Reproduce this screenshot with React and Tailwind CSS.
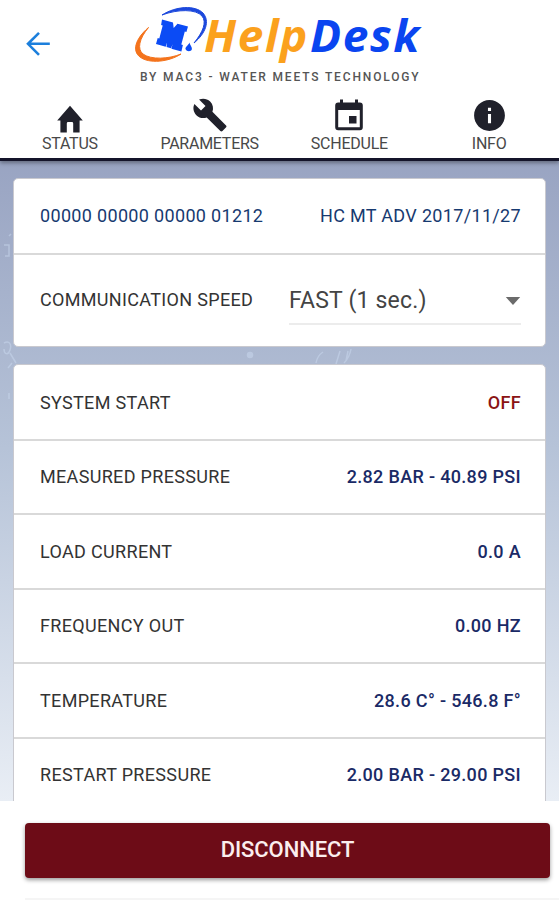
// Page - HelpDesk device status
// Shows the live readings of the connected pump controller

import React from 'react';
import { MdBuild, MdInfo } from 'react-icons/md';

const READINGS = [
  { label: 'SYSTEM START', value: 'OFF', alert: true },
  { label: 'MEASURED PRESSURE', value: '2.82 BAR - 40.89 PSI' },
  { label: 'LOAD CURRENT', value: '0.0 A' },
  { label: 'FREQUENCY OUT', value: '0.00 HZ' },
  { label: 'TEMPERATURE', value: '28.6 C° - 546.8 F°' },
  { label: 'RESTART PRESSURE', value: '2.00 BAR - 29.00 PSI' },
];

function HomeIcon() {
  return (
    <svg className="mt-2 h-7 w-7" viewBox="0 0 28 28" fill="currentColor">
      <path d="M14 .8L1.2 15.6h3.2v12h6.4V18.4q0-1.3 1.3-1.3h3.8q1.3 0 1.3 1.3v9.2h6.4v-12h3.2z" />
    </svg>
  );
}

function CalendarIcon() {
  return (
    <svg className="h-8 w-7" viewBox="0 0 28 32" fill="currentColor">
      <path d="M5 .5h3v3h12v-3h3v3h1.8q3 0 3 3v21.700q0 3-3 3H3.200q-3 0-3-3V6.500q0-3 3-3H5zM3.200 11v17.200h21.600V11z" fillRule="evenodd" />
      <rect x="14" y="17" width="7.500" height="7.500" />
    </svg>
  );
}

function Logo() {
  return (
    <svg className="h-[66px] w-[300px]" viewBox="0 0 300 66">
      {/* orbit around the badge */}
      <path d="M31 15C45 6 64 5 72 13c7 8 3 20-9 30 9-11 13-21 8-27C65 9 47 9 31 15z" fill="#1c48dc" stroke="#1c48dc" strokeWidth="1" />
      <path d="M17.500 27.500C4 39 1 51 9 57c9 7 29 5 41-3C38 59 20 60 12 54 6 49 8 39 17.500 27.500z" fill="#f4731c" stroke="#f4731c" strokeWidth="1" />
      <path d="M31 19.500l11 3 .7 5.500 3.800-4.300 10.500 2.800-1.600 5.500-1.600-.4-3.500 13 1.600.4-1.500 6.500-10-2.700 1.200-4.500-1.600 4-4.500-1.200.5-4.600-1.300 4.200-9.700-2.600 1.700-6 1.600.4 3.400-13-1.600-.4z" fill="#0b4bf5" />
      <path d="M58.500 42.500c.5 3 3 4.500 2.300 7-.7 2.200-5.200 2.300-6.200-.2-.8-2.500 2.500-3.500 3.900-6.800z" fill="#0b4bf5" />
      <g fontFamily="'Open Sans', 'Noto Sans', sans-serif" fontWeight="700" fontStyle="italic" fontSize="44" letterSpacing="1.5">
        <text x="73" y="52" textLength="105" lengthAdjust="spacingAndGlyphs" fill="#fba11d">Help</text>
        <text x="179" y="52" textLength="111" lengthAdjust="spacingAndGlyphs" fill="#0a45f0">Desk</text>
      </g>
    </svg>
  );
}

function Tab({ label, children }) {
  return (
    <button className="flex flex-col items-center text-[#20212b]">
      <span className="flex h-9 items-center justify-center">{children}</span>
      <span className="mt-[2px] text-[16px] leading-[18px] tracking-[-0.250px] text-[#484848]">{label}</span>
    </button>
  );
}

function Header() {
  return (
    <header className="relative z-10 h-[161px] shrink-0 border-b-[3px] border-[#14142a] bg-white shadow-[0_2px_4px_rgba(0,0,0,0.35)]">
      <div className="flex h-[66px] items-start">
        <button className="ml-[25px] mt-[31px]" aria-label="Back">
          <svg className="h-[26px] w-[26px]" viewBox="0 0 26 26" fill="none" stroke="#1c7fdc" strokeWidth="2.600">
            <path d="M24.800 12.800H3M14 1.800l-11 11 11 11" />
          </svg>
        </button>
        <div className="ml-[80px]">
          <Logo />
        </div>
      </div>
      <p className="pl-[140px] pt-[1px] text-[12px] font-medium leading-[21px] tracking-[1.850px] whitespace-nowrap text-[#555555]">
        BY MAC3 - WATER MEETS TECHNOLOGY
      </p>
      <nav className="mt-[9px] grid grid-cols-4">
        <Tab label="STATUS"><HomeIcon /></Tab>
        <Tab label="PARAMETERS"><MdBuild size={36} /></Tab>
        <Tab label="SCHEDULE"><CalendarIcon /></Tab>
        <Tab label="INFO"><MdInfo size={37} /></Tab>
      </nav>
    </header>
  );
}

// Faint water marks on the page background
function Ripples() {
  return (
    <svg className="pointer-events-none absolute left-0 top-0 h-[640px] w-[559px]" viewBox="0 0 559 640" fill="none" stroke="#cbdaf0" strokeWidth="1.500" opacity="0.5">
      <path d="M4 84h5v11H5M9 75l2-2M4 182c5-3 8 1 6 7s-6 4-6-1M10 192l6 10M8 207l4-5M9 232v6" />
      <path d="M316 202c1-6 4-9 7-11M336 203l4-13M344 202c4-4 6-8 7-14M348 190l-2 10" />
      <circle cx="250" cy="194" r="2.500" fill="#cbdaf0" />
    </svg>
  );
}

function DeviceCard() {
  return (
    <section className="relative shrink-0 rounded-[5px] border border-[#c9c9cf] bg-white text-[18px] tracking-[0.330px]">
      <div className="flex h-[76px] items-center justify-between border-b-2 border-[#d9d9d9] pb-[2px] pl-[26px] pr-[24px] text-[#173a70]">
        <span>00000 00000 00000 01212</span>
        <span>HC MT ADV 2017/11/27</span>
      </div>
      <div className="flex h-[91px] items-center justify-between pb-[1px] pl-[26px] pr-[24px]">
        <span className="pb-[2px] text-[#333333]">COMMUNICATION SPEED</span>
        <div className="flex h-[49px] w-[232px] items-center justify-between border-b-2 border-[#ececec] text-[23px] tracking-[0.200px] text-[#444444]">
          <span className="pt-[4px]">FAST (1 sec.)</span>
          <svg className="mt-[3px] h-2 w-4" viewBox="0 0 16 8" fill="#6b6b6b">
            <path d="M.8 0h14.400L8 8z" />
          </svg>
        </div>
      </div>
    </section>
  );
}

function ReadingRow({ label, value, alert }) {
  return (
    <div className="flex h-[74.5px] items-center justify-between border-b-2 border-[#d9d9d9] pl-[26px] pr-[24px]">
      <span className="text-[#333333]">{label}</span>
      <span className={alert ? 'font-medium text-[#8b1414]' : 'font-medium text-[#1a2a66]'}>{value}</span>
    </div>
  );
}

export default function App() {
  return (
    <div className="flex h-[900px] w-[559px] flex-col overflow-hidden bg-white font-['Roboto',sans-serif]">
      <Header />
      <main className="relative flex h-[640px] shrink-0 flex-col gap-[17px] overflow-hidden bg-linear-to-b from-[#99a4c2] via-[#b6c3d8] via-45% to-[#e9eef5] px-[13px] pt-[17px]">
        <Ripples />
        <DeviceCard />
        <section className="relative shrink-0 rounded-[5px] border border-[#c9c9cf] bg-white pt-[1px] text-[18px] tracking-[0.330px]">
          {READINGS.map((row) => (
            <ReadingRow key={row.label} {...row} />
          ))}
        </section>
      </main>
      <footer className="flex flex-1 flex-col justify-between pl-[25px] pt-[22px]">
        <button className="mr-[9px] h-[55px] rounded-[4px] bg-[#6d0c17] pb-[2px] text-[22px] font-medium tracking-[-0.100px] text-[#fbeeee] shadow-[0_2px_4px_rgba(0,0,0,0.4)]">
          DISCONNECT
        </button>
        <div className="h-[2px] bg-[#f5f5f5]" />
      </footer>
    </div>
  );
}
